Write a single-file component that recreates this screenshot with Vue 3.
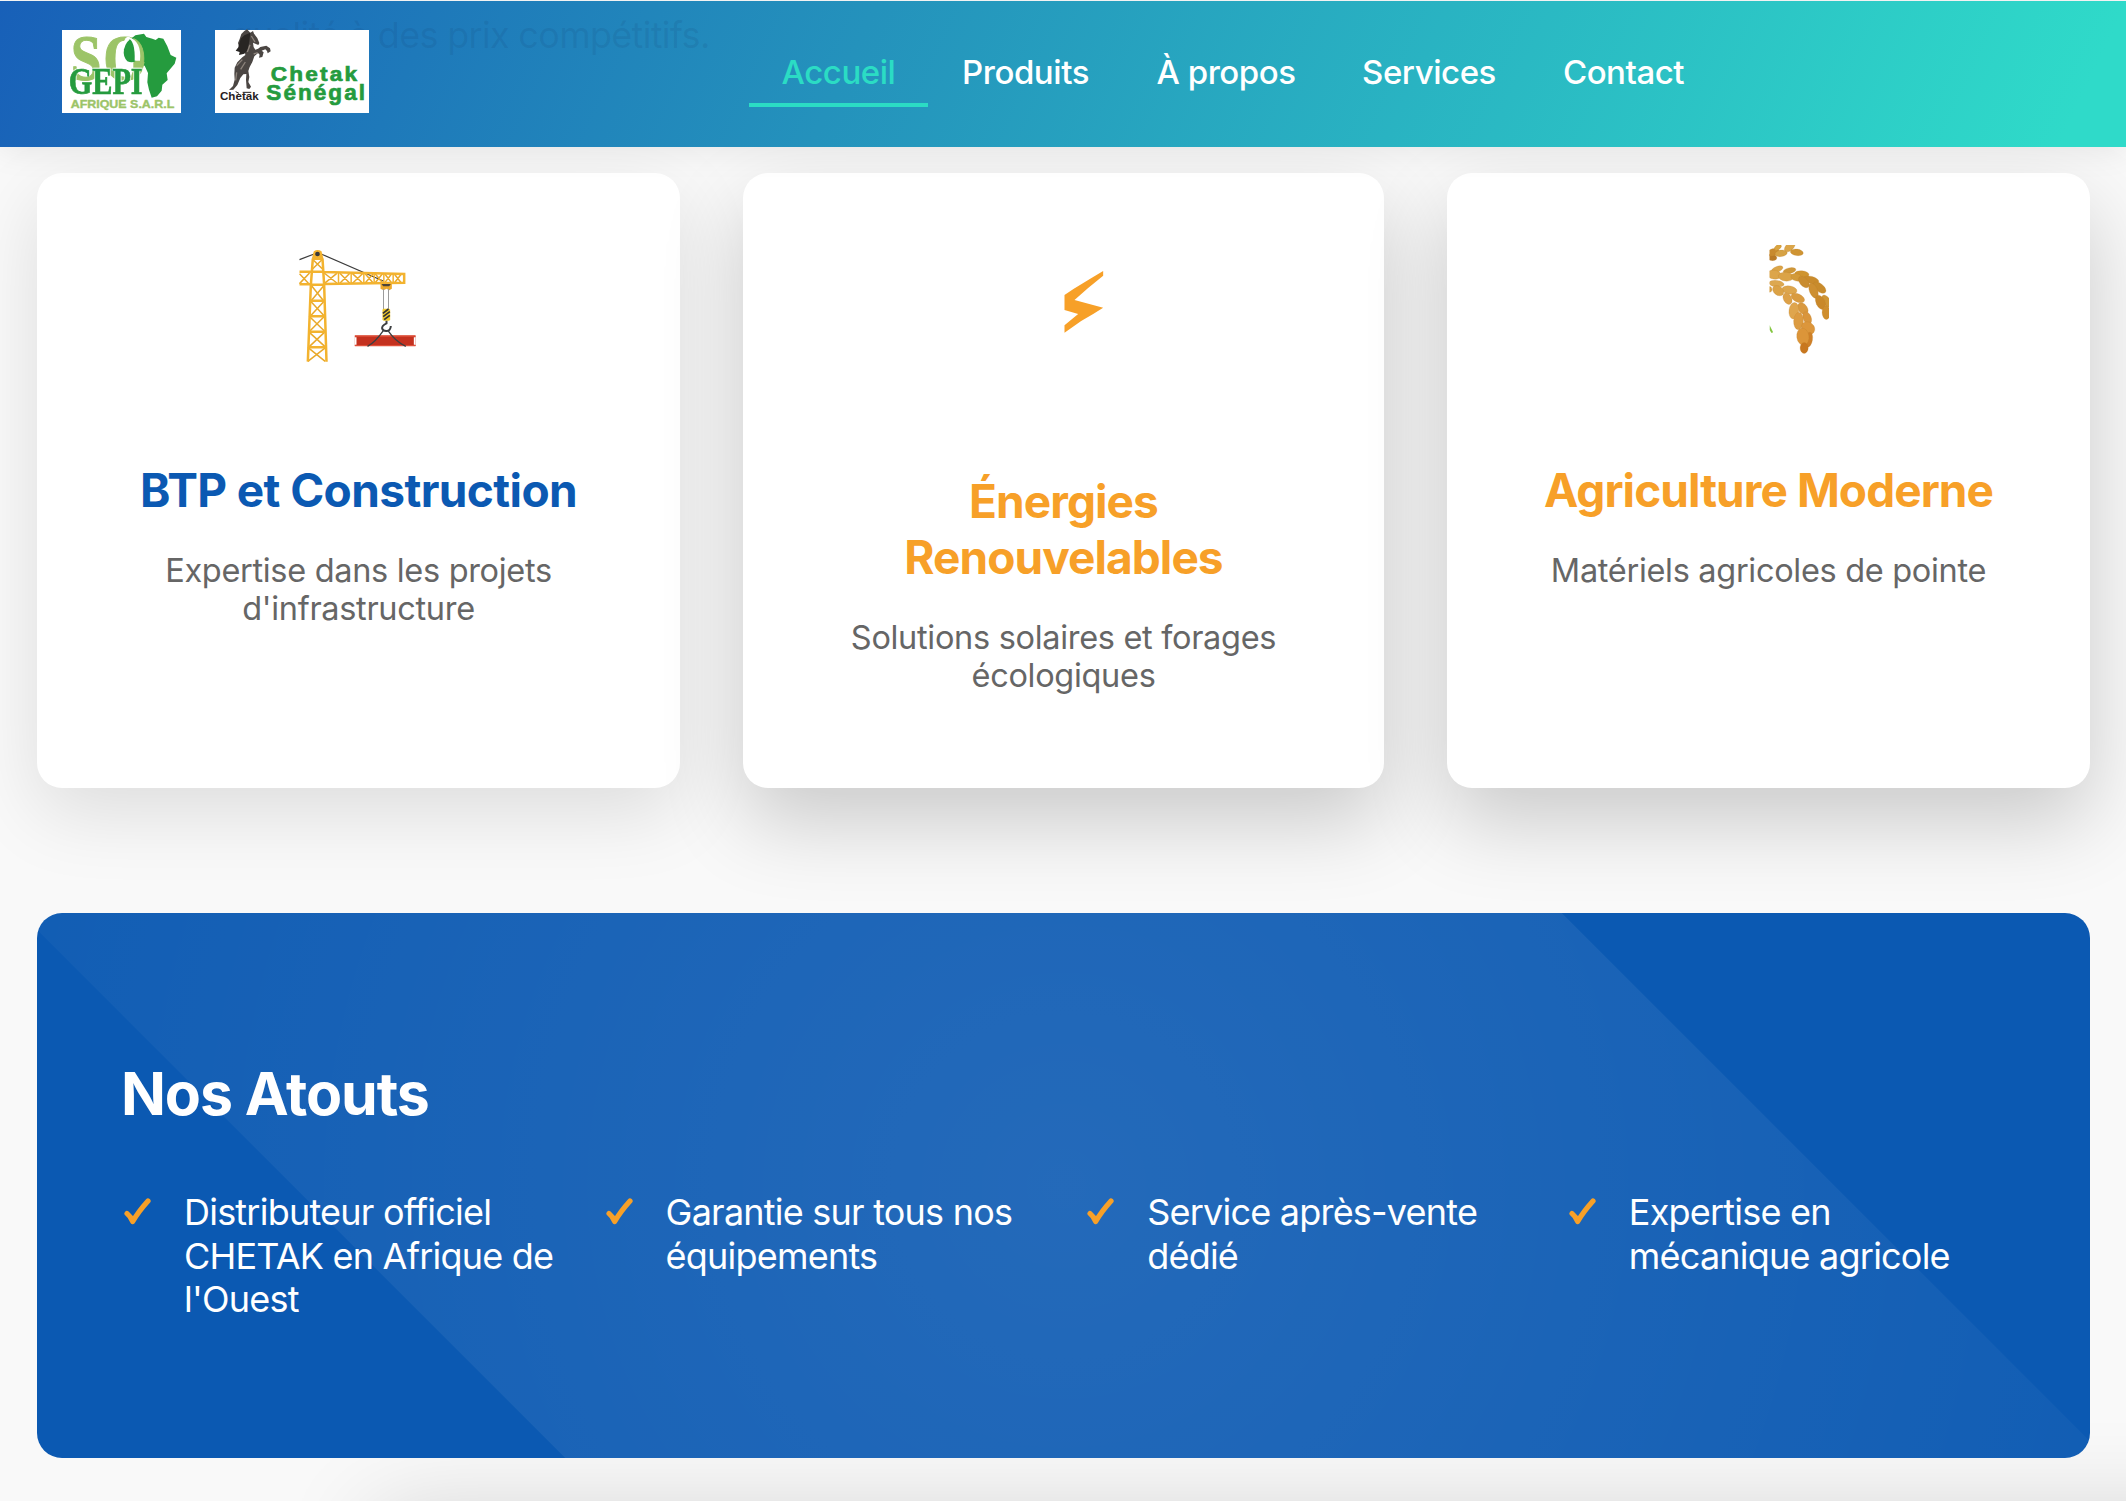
<script setup>
const links = [
  { label: 'Accueil', active: true, width: 179 },
  { label: 'Produits', width: 195 },
  { label: 'À propos', width: 206 },
  { label: 'Services', width: 200 },
  { label: 'Contact', width: 189 },
]

const cards = [
  { icon: 'crane', tone: 'blue', title: ['BTP et Construction'], text: ['Expertise dans les projets', "d'infrastructure"] },
  { icon: 'bolt', tone: 'orange deep', title: ['Énergies', 'Renouvelables'], text: ['Solutions solaires et forages', 'écologiques'] },
  { icon: 'wheat', tone: 'orange deep', title: ['Agriculture Moderne'], text: ['Matériels agricoles de pointe'] },
]

const strengths = [
  ['Distributeur officiel', 'CHETAK en Afrique de', "l'Ouest"],
  ['Garantie sur tous nos', 'équipements'],
  ['Service après-vente', 'dédié'],
  ['Expertise en', 'mécanique agricole'],
]

// Wheat kernels: centre x, centre y, half length, half width, angle, colour
const grains = [
  [94, 112, 14, 8, 10, '#b97a26'],
  [98, 97, 17, 9, -15, '#c88a2e'],
  [112, 82, 11, 6, -38, '#d9a440'],
  [122, 100, 17, 8, -8, '#d6a245'],
  [148, 80, 18, 9, -42, '#dba64a'],
  [169, 97, 18, 8, 8, '#cf9433'],
  [110, 148, 17, 7, -22, '#dba548'],
  [101, 164, 20, 11, 8, '#dca54b'],
  [147, 152, 18, 7, -12, '#cf9739'],
  [136, 170, 21, 11, 6, '#dba347'],
  [184, 162, 20, 8, 5, '#cf942f'],
  [168, 172, 16, 9, 15, '#d39a3a'],
  [212, 180, 22, 9, 15, '#c98b2c'],
  [190, 186, 19, 10, 48, '#c98c2f'],
  [237, 203, 21, 10, 38, '#c88b2c'],
  [219, 212, 22, 10, 68, '#cd8f31'],
  [259, 244, 20, 9, 55, '#cf9535'],
  [240, 247, 21, 11, 65, '#c98829'],
  [257, 278, 19, 10, 88, '#cf8e2e'],
  [87, 208, 8, 6, 80, '#d9a041'],
  [108, 191, 21, 8, 6, '#dda850'],
  [147, 210, 21, 10, 10, '#dda64d'],
  [113, 212, 17, 11, 38, '#dba246'],
  [172, 234, 20, 10, 25, '#d99b40'],
  [141, 236, 17, 10, 62, '#dda148'],
  [187, 266, 18, 11, 52, '#d99940'],
  [160, 272, 23, 12, 97, '#dfa54d'],
  [200, 294, 18, 10, 68, '#d9953c'],
  [174, 303, 24, 12, 93, '#dc9b41'],
  [203, 324, 20, 14, 38, '#dc963b'],
  [205, 359, 21, 9, 100, '#cf8028'],
  [187, 350, 24, 15, 82, '#dc9539'],
  [191, 384, 15, 10, 90, '#c8771f'],
]
</script>

<template>
  <div class="page">
    <header class="topbar">
      <p class="ghost">qualité à des prix compétitifs.</p>
      <div class="logos">
        <svg class="logo-a" viewBox="36 30 357 249">
          <rect x="36" y="30" width="357" height="249" fill="#fff" />
          <path d="M246 54l10-8 26-5 7 10 18 5 10 4 9-7 14 3 12 23 10 26 17 8-5 18-24 29 3 20-16 14-2 18-14 17-16 4-8-24-5-22 2-28-10-22-20-2-40-8-4-22 8-30z" fill="#259b3e" />
          <g font-family="'Liberation Serif', serif" font-weight="700">
            <g fill="#9cc468" stroke="#9cc468" stroke-width="3">
              <text x="62" y="179" font-size="196" textLength="92" lengthAdjust="spacingAndGlyphs">S</text>
              <text x="160" y="179" font-size="196" textLength="130" lengthAdjust="spacingAndGlyphs">O</text>
            </g>
            <ellipse cx="234" cy="112" rx="19" ry="62" fill="#fff" />
            <path d="M222 88q6-26 28-36l8 70q-10 8-26 2-14-14-10-36z" fill="#259b3e" />
            <path d="M234 54q22 8 20 68l16 0q6-60-36-72z" fill="#fff" />
            <path d="M250 127q16-6 34 0l-8 22h-26z" fill="#9cc468" />
            <text class="gepi" x="56" y="222" font-size="113" textLength="222" lengthAdjust="spacingAndGlyphs" fill="#259b3e" stroke="#259b3e" stroke-width="2">GEPI</text>
          </g>
          <text x="62" y="263" font-size="31" font-weight="700" font-family="'Liberation Sans', sans-serif" textLength="311" lengthAdjust="spacingAndGlyphs" fill="#9cc468" stroke="#9cc468">AFRIQUE S.A.R.L</text>
        </svg>
        <svg class="logo-b" viewBox="495 30 462 249">
          <rect x="495" y="30" width="462" height="249" fill="#fff" />
          <path d="M601 38l8-5 3 8q12 12 16 28l-3 6-9-4-7-3q0 14 7 21 9-2 15-8l18-4 11 8 2 9-9 6-2-7-5-5-11 4 6 5-4 14-10 2 2-9-5-5-11 10-6 17-8 15-4 12 3 18-3 15 8 14-5 7-8-2-2-25 1-18-9 1-9 11-9 21-12 14-13 1 12-12 5-19-1-17 1-19 8-16 15-15 9-7-2-13-9 4-12-4 4-11-3-12 5-12 5-15 9-9 8-5z" fill="#4b4643" />
          <path d="M601 38l-18 8-11 10-7 26-8 10 12 4-2 9 16-4 10-12 5-25z" fill="#282523" />
          <path d="M604 48l11 18M600 74l-8 22M577 119l-17 18M586 126l-14 22M560 157l-3 24M611 102l12-4" fill="none" stroke="#8c837b" stroke-width="4" />
          <g font-family="'Liberation Sans', sans-serif" font-weight="700">
            <text x="510" y="240" font-size="31" textLength="116" lengthAdjust="spacingAndGlyphs" fill="#25201f">Chetak</text>
            <path d="M557 215l10 5M578 217h26" stroke="#25201f" stroke-width="3" />
            <g fill="#259b3e" stroke="#259b3e" stroke-width="2" letter-spacing="6">
              <text x="662" y="182" font-size="61" textLength="266" lengthAdjust="spacingAndGlyphs">Chetak</text>
              <text x="649" y="240" font-size="67" textLength="302" lengthAdjust="spacingAndGlyphs">Sénégal</text>
            </g>
          </g>
        </svg>
      </div>
      <nav class="nav">
        <a v-for="l in links" :key="l.label" :class="{ active: l.active }" :style="{ width: l.width + 'px' }">{{ l.label }}</a>
      </nav>
    </header>

    <main>
      <section class="cards">
        <article v-for="c in cards" :key="c.icon" class="card" :class="[c.tone, c.icon]">
          <svg v-if="c.icon === 'crane'" class="icon" viewBox="55.5 45 360 360">
            <g fill="none" stroke="#3c3c3c" stroke-width="3.5">
              <path d="M57 89l44-17M120 71l190 83" />
            </g>
            <g fill="none" stroke="#e9a92b" stroke-width="4.5">
              <path d="M96 88l30 29M126 88l-30 29M92 166l37 46M131 166l-39 46M89 212l43 47M132 212l-43 47M86 259l48 46M132 259l-46 46M84 305l52 47M134 305l-50 47M82 352l52 42M136 352l-54 42" />
              <path d="M57 131l28 30M57 161l30-32M131 129l38 30M131 161l38-31M178 130l30 30M178 160l30-30M216 131l30 28M216 160l30-29M254 131l24 28M254 159l24-28M284 131l22 27M284 158l22-27M313 132l20 26M313 158l20-26M342 133l20 25M342 158l20-25" />
            </g>
            <g fill="none" stroke="#f3b32f" stroke-width="7.500">
              <path d="M57 125h36M57 163h34M128 126l243 6v26l-240 4M93 125h36M91 164h40M90 212h43M88 259h46M86 305h50M84 352h53" />
              <path d="M174 128v33M212 129v31M250 130v29M281 131v28M310 131v28M338 132v27" stroke-width="4.500" />
              <path d="M97 86l-6 80-9 229M126 86l5 80 7 229M96 86h31" />
            </g>
            <path d="M100 64q11-8 23 0l6 22H94z" fill="#f3b32f" />
            <circle cx="111" cy="72" r="7" fill="#383838" />
            <path d="M300 162h34v14l-8 5-8-5-9 5-9-5z" fill="#eda92a" />
            <path d="M303 162h28l-5 7h-18z" fill="#4a443b" />
            <path d="M309 176v62M324 176v62" stroke="#9b9b9b" stroke-width="3" />
            <rect x="306" y="236" width="23" height="36" rx="4" fill="#f0c82a" />
            <path d="M307 250l17-13M308 260l20-15M311 269l17-13" stroke="#333" stroke-width="5" />
            <rect x="223" y="317" width="182" height="31" fill="#c4311f" />
            <path d="M223 318h182M223 347h182" stroke="#e0503a" stroke-width="4" />
            <path d="M223 322h5v22h-5zM400 322h5v22h-5z" fill="#fff" />
            <path d="M318 272v8q-15 7-13 16 3 8 14 7 11-1 12-15" fill="none" stroke="#3d3f41" stroke-width="6" />
            <path d="M309 301q-24 35-48 48M322 301q22 33 54 48" fill="none" stroke="#3d3f41" stroke-width="4" />
          </svg>
          <svg v-else-if="c.icon === 'bolt'" class="icon" viewBox="-49.5 45 360 360">
            <path d="M132 195l28-19 48-29 40-24v14l-46 38-40 35 86 23-30 19-36 21-50 35v-22l41-34-41-12z" fill="#f7a028" />
          </svg>
          <svg v-else class="icon" viewBox="-94.5 75 360 360">
            <defs>
              <clipPath id="half"><rect x="87" y="60" width="200" height="360" /></clipPath>
            </defs>
            <g clip-path="url(#half)">
              <ellipse v-for="(g, i) in grains" :key="i" :rx="g[2] * 1.08" :ry="g[3] * 1.22" :fill="g[5]" stroke="#b97c27" stroke-opacity=".4" stroke-width="1.5" :transform="`translate(${g[0]} ${g[1]}) rotate(${g[4]})`" />
              <path d="M87 315l11 22-5 2-6-10z" fill="#84c641" />
            </g>
          </svg>
          <h3><span v-for="t in c.title" :key="t">{{ t }}</span></h3>
          <p><span v-for="t in c.text" :key="t">{{ t }}</span></p>
        </article>
      </section>

      <section class="panel">
        <h2>Nos Atouts</h2>
        <ul>
          <li v-for="s in strengths" :key="s[0]">
            <svg class="check" viewBox="0 0 28 28"><path d="M3 15.500q3.800 3 5.700 8Q14.500 13.500 24 3" fill="none" stroke="#f7a028" stroke-width="5.200" stroke-linecap="round" stroke-linejoin="round" /></svg>
            <p><span v-for="t in s" :key="t">{{ t }}</span></p>
          </li>
        </ul>
      </section>

      <section class="next"></section>
    </main>
  </div>
</template>

<style>
body {
  margin: 0;
  overflow: hidden;
}
</style>

<style scoped>
.page {
  width: 2126px;
  height: 1501px;
  box-sizing: border-box;
  padding-top: 1px;
  overflow: hidden;
  background: #f9f9f9;
  font-family: Inter, 'Liberation Sans', sans-serif;
}

h2, h3, p, ul {
  margin: 0;
  padding: 0;
}

span {
  display: block;
  white-space: nowrap;
}

.topbar {
  position: relative;
  z-index: 2;
  display: flex;
  align-items: flex-start;
  height: 146px;
  box-sizing: border-box;
  padding-left: 62px;
  background: linear-gradient(115deg, #1860b8 0%, #2492bc 40%, #2fdac9 97%);
  box-shadow: 0 4px 30px rgba(0, 0, 0, 0.08);
}

.ghost {
  position: absolute;
  left: 231px;
  top: 11px;
  font-size: 36px;
  line-height: 46px;
  letter-spacing: -0.7px;
  color: rgba(20, 60, 110, 0.13);
  white-space: nowrap;
}

.logos {
  position: relative;
  display: flex;
  gap: 34px;
  margin-top: 29px;
}

.logos svg {
  display: block;
  height: 83px;
  overflow: visible;
}

.logo-a {
  width: 119px;
}

.logo-b {
  width: 154px;
}

.gepi {
  filter: drop-shadow(2px -2px 0 #fff) drop-shadow(-2px 0 0 #fff);
}

.nav {
  display: flex;
  margin: 51px 0 0 380px;
}

.nav a {
  box-sizing: border-box;
  padding-bottom: 11px;
  border-bottom: 4px solid transparent;
  font-size: 33px;
  font-weight: 500;
  line-height: 40px;
  letter-spacing: -0.45px;
  text-align: center;
  white-space: nowrap;
  color: #fff;
}

.nav a.active {
  color: #2bdcc4;
  border-color: #2bdcc4;
}

.cards {
  display: grid;
  grid-template-columns: 643px 641px 643px;
  gap: 63px;
  padding: 26px 36px 0 37px;
}

.card {
  display: flex;
  flex-direction: column;
  align-items: center;
  box-sizing: border-box;
  height: 615px;
  padding-top: 72px;
  border-radius: 25px;
  background: #fff;
  box-shadow: 0 25px 76px rgba(0, 0, 0, 0.115);
  text-align: center;
}

.card.deep {
  box-shadow: 0 34px 82px rgba(0, 0, 0, 0.19);
}

.icon {
  width: 120px;
  height: 120px;
}

h3 {
  margin-top: 97px;
  font-size: 46px;
  font-weight: 700;
  line-height: 56px;
}

.bolt h3 {
  margin-top: 108px;
}

.blue h3 {
  letter-spacing: -0.6px;
  color: #0b59b2;
}

.orange h3 {
  letter-spacing: -0.93px;
  color: #f7a028;
}

.card p {
  margin-top: 34px;
  font-size: 32.5px;
  line-height: 37.7px;
  letter-spacing: -0.31px;
  color: #666;
}

.panel {
  position: relative;
  z-index: 0;
  overflow: hidden;
  box-sizing: border-box;
  height: 545px;
  margin: 125px 36px 0 37px;
  padding: 144px 84px 0;
  border-radius: 25px;
  background: #0b59b2;
  color: #fff;
}

.panel::before {
  content: '';
  position: absolute;
  z-index: -1;
  top: -50%;
  left: -50%;
  width: 200%;
  height: 200%;
  background: radial-gradient(circle, rgba(255, 255, 255, 0.1) 0%, transparent 70%);
  transform: rotate(45deg);
}

h2 {
  font-size: 59px;
  font-weight: 700;
  line-height: 74px;
  letter-spacing: -1.1px;
}

ul {
  display: flex;
  margin-top: 60px;
  list-style: none;
}

li {
  display: flex;
  flex: none;
  gap: 32px;
  width: 481.6px;
}

.check {
  flex: none;
  width: 28px;
  height: 28px;
  margin: 7px 0 0 3px;
}

li p {
  font-size: 36px;
  line-height: 43.6px;
  letter-spacing: -0.78px;
}

.next {
  width: 1900px;
  height: 300px;
  margin: 56px 0 0 375px;
  box-shadow: 0 0 90px rgba(0, 0, 0, 0.16);
}
</style>
